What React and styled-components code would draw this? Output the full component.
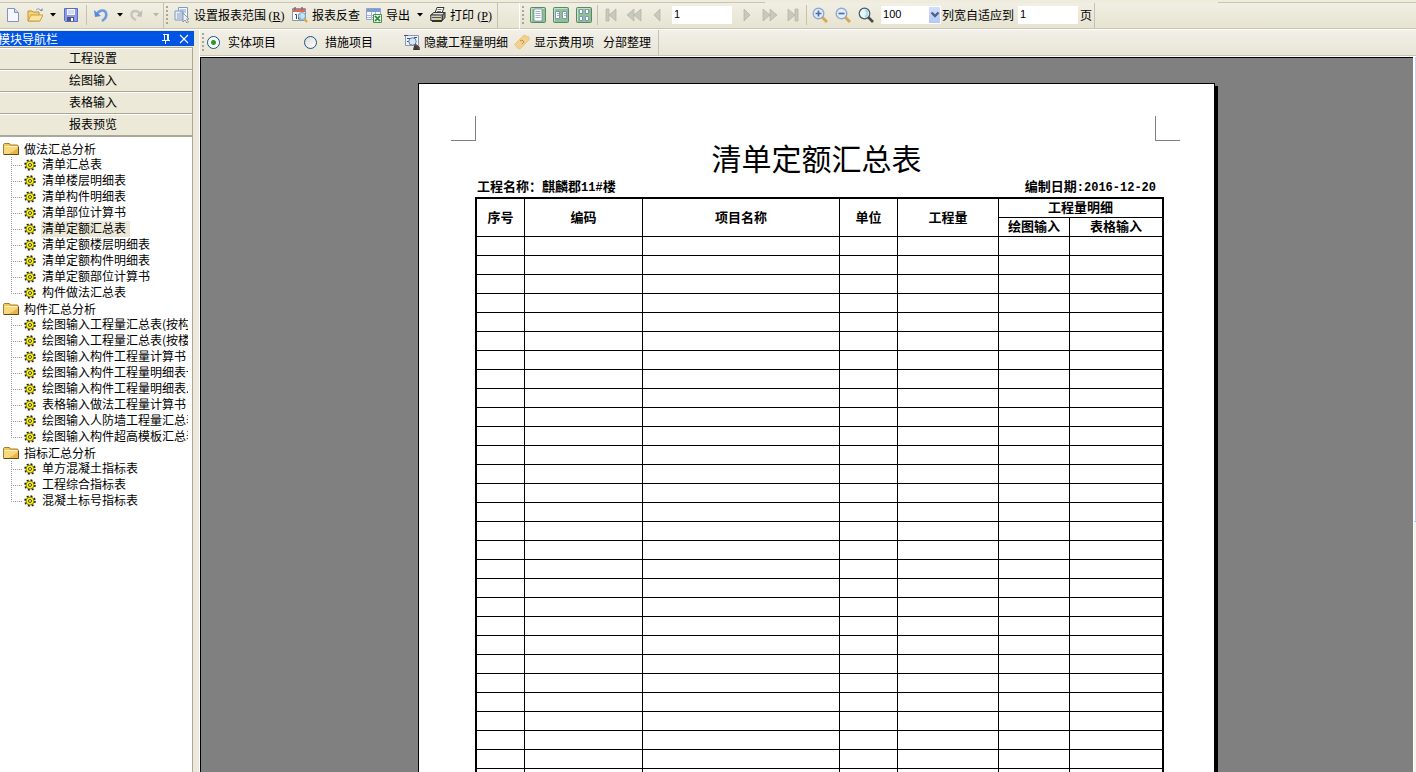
import { useState } from "react";
import styled, { createGlobalStyle, css } from "styled-components";

const navSections = ["工程设置", "绘图输入", "表格输入", "报表预览"];

const reportTree = [
  {
    name: "做法汇总分析",
    reports: [
      "清单汇总表",
      "清单楼层明细表",
      "清单构件明细表",
      "清单部位计算书",
      "清单定额汇总表",
      "清单定额楼层明细表",
      "清单定额构件明细表",
      "清单定额部位计算书",
      "构件做法汇总表",
    ],
  },
  {
    name: "构件汇总分析",
    reports: [
      "绘图输入工程量汇总表(按构件)",
      "绘图输入工程量汇总表(按楼层)",
      "绘图输入构件工程量计算书",
      "绘图输入构件工程量明细表一",
      "绘图输入构件工程量明细表...",
      "表格输入做法工程量计算书",
      "绘图输入人防墙工程量汇总表",
      "绘图输入构件超高模板汇总表",
    ],
  },
  {
    name: "指标汇总分析",
    reports: ["单方混凝土指标表", "工程综合指标表", "混凝土标号指标表"],
  },
];

const columnWidths = [48, 118, 197, 58, 101, 71, 92];
const emptyRows = Array.from({ length: 44 }, (_, i) => i);

export default function App() {
  const [selected, setSelected] = useState("清单定额汇总表");

  return (
    <>
      <GlobalStyle />
      <Window>
        <TopStrip>
          <StripEdge $share="54%" />
          <StripEdge $share="14%" />
        </TopStrip>
        <ToolbarRow>
          <FileBand />
          <ReportBand />
          <BandGap />
          <PagingBand />
        </ToolbarRow>
        <Body>
          <Navigator selected={selected} onSelect={setSelected} />
          <Main>
            <OptionsBar />
            <Preview />
          </Main>
        </Body>
      </Window>
    </>
  );
}

function FileBand() {
  return (
    <Band $indent>
      <ToolButton aria-label="新建"><NewIcon /></ToolButton>
      <ToolButton aria-label="打开"><OpenIcon /></ToolButton>
      <Drop aria-label="最近文件"><ArrowIcon /></Drop>
      <ToolButton aria-label="保存"><SaveIcon /></ToolButton>
      <Separator $wide />
      <ToolButton aria-label="撤销"><UndoIcon /></ToolButton>
      <Drop aria-label="撤销列表"><ArrowIcon /></Drop>
      <ToolButton aria-label="恢复" disabled><RedoIcon /></ToolButton>
      <Drop aria-label="恢复列表" disabled><ArrowIcon color="#b9b7ab" /></Drop>
    </Band>
  );
}

function ReportBand() {
  return (
    <Band>
      <Grip />
      <ToolButton>
        <RangeIcon />
        <span>设置报表范围<Mnemonic>(<u>R</u>)</Mnemonic></span>
      </ToolButton>
      <ToolButton><CheckIcon />报表反查</ToolButton>
      <ToolButton><ExportIcon />导出</ToolButton>
      <Drop aria-label="导出选项"><ArrowIcon /></Drop>
      <ToolButton>
        <PrintIcon />
        <span>打印<Mnemonic>(<u>P</u>)</Mnemonic></span>
      </ToolButton>
    </Band>
  );
}

function PagingBand() {
  return (
    <Band $light>
      <Grip />
      <Group>
        <ToolButton aria-label="单页"><PagesIcon kind="one" /></ToolButton>
        <ToolButton aria-label="双页"><PagesIcon kind="two" /></ToolButton>
        <ToolButton aria-label="四页"><PagesIcon kind="four" /></ToolButton>
      </Group>
      <Separator />
      <Group>
        <ToolButton aria-label="首页" disabled><StepIcon d="M3 2h3v12H3zM13 2v12L6 8z" /></ToolButton>
        <ToolButton aria-label="快退" disabled><StepIcon d="M8 2v12L1 8zM15 2v12L8 8z" /></ToolButton>
        <ToolButton aria-label="上一页" disabled><StepIcon d="M11 2v12L5 8z" /></ToolButton>
      </Group>
      <TextField aria-label="页码" defaultValue="1" />
      <Group>
        <ToolButton aria-label="下一页" disabled><StepIcon d="M5 2v12l6-6z" /></ToolButton>
        <ToolButton aria-label="快进" disabled><StepIcon d="M1 2v12l7-6zM8 2v12l7-6z" /></ToolButton>
        <ToolButton aria-label="末页" disabled><StepIcon d="M3 2v12l7-6zM10 2h3v12h-3z" /></ToolButton>
      </Group>
      <Separator />
      <Group>
        <ToolButton aria-label="放大"><ZoomIcon sign="plus" /></ToolButton>
        <ToolButton aria-label="缩小"><ZoomIcon sign="minus" /></ToolButton>
        <ToolButton aria-label="缩放"><LensIcon /></ToolButton>
      </Group>
      <Combo>
        <ZoomSelect aria-label="缩放比例" defaultValue="100">
          <option>50</option>
          <option>100</option>
          <option>200</option>
        </ZoomSelect>
        <ComboArrow>
          <svg width="10" height="8" viewBox="0 0 10 8">
            <path d="M1.500 1.500L5 5l3.500-3.500" fill="none" stroke="#4d6185" strokeWidth="2.400" />
          </svg>
        </ComboArrow>
      </Combo>
      <label htmlFor="fit">列宽自适应到</label>
      <TextField id="fit" defaultValue="1" $short />
      <span>页</span>
    </Band>
  );
}

function OptionsBar() {
  return (
    <OptionsRow>
      <OptionsBand>
        <Grip />
        <RadioItem><Radio type="radio" name="kind" defaultChecked />实体项目</RadioItem>
        <RadioItem><Radio type="radio" name="kind" />措施项目</RadioItem>
        <ToolButton><HideIcon />隐藏工程量明细</ToolButton>
        <ToolButton><TagIcon />显示费用项</ToolButton>
        <ToolButton $wide>分部整理</ToolButton>
      </OptionsBand>
    </OptionsRow>
  );
}

function Navigator({ selected, onSelect }) {
  return (
    <Nav>
      <NavCaption>
        <NavTitle>模块导航栏</NavTitle>
        <CaptionButton aria-label="固定">
          <svg width="10" height="10" viewBox="0 0 10 10" shapeRendering="crispEdges">
            <path d="M2 0h6v1H2zM3 1h1v5H3zM6 1h2v5H6zM1 6h8v1H1zM4 7h1v3H4z" fill="#fff" />
          </svg>
        </CaptionButton>
        <CaptionButton aria-label="关闭">
          <svg width="10" height="10" viewBox="0 0 10 10">
            <path d="M1 1l8 8M9 1L1 9" stroke="#fff" strokeWidth="1.100" />
          </svg>
        </CaptionButton>
      </NavCaption>
      <NavPanel>
        {navSections.map((section) => (
          <NavSection key={section}>{section}</NavSection>
        ))}
        <Tree>
          {reportTree.map((folder) => (
            <li key={folder.name}>
              <Folder><FolderIcon />{folder.name}</Folder>
              <Branch>
                {folder.reports.map((report) => (
                  <Leaf key={report}>
                    <GearIcon />
                    <LeafButton $active={report === selected} onClick={() => onSelect(report)}>
                      {report}
                    </LeafButton>
                  </Leaf>
                ))}
              </Branch>
            </li>
          ))}
        </Tree>
      </NavPanel>
    </Nav>
  );
}

function Preview() {
  return (
    <PreviewRow>
      <Canvas>
        <Paper>
          <CropMarks>
            <CropMark $side="right" />
            <CropMark $side="left" />
          </CropMarks>
          <PaperTitle>清单定额汇总表</PaperTitle>
          <PaperContent>
            <PaperInfo>
              <span>工程名称：麒麟郡<Digits>11#</Digits>楼</span>
              <span>编制日期<Digits>:2016-12-20</Digits></span>
            </PaperInfo>
            <Sheet>
              <colgroup>
                {columnWidths.map((width, i) => (
                  <col key={i} style={{ width }} />
                ))}
              </colgroup>
              <thead>
                <tr>
                  <th rowSpan={2}>序号</th>
                  <th rowSpan={2}>编码</th>
                  <th rowSpan={2}>项目名称</th>
                  <th rowSpan={2}>单位</th>
                  <th rowSpan={2}>工程量</th>
                  <th colSpan={2} className="last">工程量明细</th>
                </tr>
                <tr>
                  <th>绘图输入</th>
                  <th className="last">表格输入</th>
                </tr>
              </thead>
              <tbody>
                {emptyRows.map((row) => (
                  <tr key={row}>
                    {columnWidths.map((_, i) => (
                      <td key={i} className={i === 6 ? "last" : undefined} />
                    ))}
                  </tr>
                ))}
              </tbody>
            </Sheet>
          </PaperContent>
        </Paper>
      </Canvas>
      <ScrollTrack><ScrollThumb /></ScrollTrack>
    </PreviewRow>
  );
}

/* icons */

const Icon = ({ children, ...rest }) => (
  <svg width="16" height="16" viewBox="0 0 16 16" aria-hidden="true" {...rest}>{children}</svg>
);

const ArrowIcon = ({ color = "#000" }) => (
  <svg width="6" height="4" viewBox="0 0 6 4"><path d="M0 0h6L3 3.500z" fill={color} /></svg>
);

const NewIcon = () => (
  <Icon>
    <path d="M2.500 1.500h7l4 4v9h-11z" fill="#f4f8fe" stroke="#7f95ba" />
    <path d="M9.500 1.500v4h4" fill="#cbd9ee" stroke="#7f95ba" />
  </Icon>
);

const OpenIcon = () => (
  <Icon>
    <path d="M1 14V4h4l1 1h6v9z" fill="#f5d274" stroke="#c09334" />
    <path d="M1 14l3-6h12l-3 6z" fill="#fbe3a0" stroke="#c99f42" />
    <path d="M9 3c2-2 4-1 5 1" fill="none" stroke="#7f9cc0" />
    <path d="M12.500 4h3V1z" fill="#6d8cb6" />
  </Icon>
);

const SaveIcon = () => (
  <Icon>
    <path d="M1.500 1.500h13v13h-12l-1-1z" fill="#8c9ae8" stroke="#5a6bc0" />
    <path d="M4 2h8v6H4z" fill="#f2f5ff" />
    <path d="M5 4h6M5 6h6" stroke="#b8c4e6" />
    <path d="M4 10h7v4H4z" fill="#4d5780" />
    <path d="M8 11h2v3H8z" fill="#fff" />
  </Icon>
);

const UndoIcon = () => (
  <Icon>
    <path d="M3 7c2-4 8-5 9-1 1 3-1 6-4 8" fill="none" stroke="#6f9ae0" strokeWidth="2.600" />
    <path d="M0 3l1 7 6-1z" fill="#5b88d6" />
  </Icon>
);

const RedoIcon = () => (
  <Icon>
    <path d="M10 7C8 3 2 3 1.500 7 1 10 4 12 6 13" fill="none" stroke="#c5c4bd" strokeWidth="2.400" />
    <path d="M12.500 3l-1 7-5-1z" fill="#bcbbb4" />
  </Icon>
);

const RangeIcon = () => (
  <Icon>
    <path d="M4.500.5h9v11h-9z" fill="#f3f7fd" stroke="#829bc1" />
    <path d="M1 4h8v9H1z" fill="#e3ecf8" stroke="#829bc1" />
    <path d="M6 3h6M6 5h6M3 7h6M3 9h5M3 11h5" stroke="#8ca3c7" />
    <path d="M9 6v9l2-2 2 3 1.500-1-2-3H15z" fill="#eef1f6" stroke="#7a8599" strokeWidth=".8" />
  </Icon>
);

const CheckIcon = () => (
  <Icon>
    <path d="M.5 1.500h13v12H.5z" fill="#f7f8fb" stroke="#8996ac" />
    <path d="M1 2h12v3H1z" fill="#df6a4c" />
    <path d="M3 0v3M10 0v3" stroke="#6b7485" strokeWidth="1.500" />
    <path d="M3 7.500h1.500V12M6.500 7.500h2V12h-2z" fill="none" stroke="#414955" />
    <circle cx="10" cy="9" r="3.500" fill="#b9e3f7" fillOpacity=".85" stroke="#75a7cb" />
    <path d="M12.500 12l2.500 3" stroke="#e0a640" strokeWidth="2.200" />
  </Icon>
);

const ExportIcon = () => (
  <Icon>
    <path d="M.5 1.500h14v11H.5z" fill="#f8fafe" stroke="#91a4c8" />
    <path d="M1 2h13v3H1z" fill="#7e9bd2" />
    <path d="M5.500 5v8M9.500 5v8M1 8.500h13M1 10.500h13" stroke="#a9b9d9" />
    <path d="M7.500 7.500h8v8h-8z" fill="#e5f3e2" stroke="#43934b" />
    <path d="M9 9l5 5M14 9l-5 5" stroke="#2d8338" strokeWidth="1.700" />
  </Icon>
);

const PrintIcon = () => (
  <Icon>
    <path d="M5 6l2-5.500h7L12 6z" fill="#fff" stroke="#333" />
    <path d="M7.500 2.500h4M7 4.500h4" stroke="#777" />
    <path d="M.8 8l3-2.500h11L12 8.500z" fill="#e8e8e2" stroke="#333" />
    <path d="M.8 8h11.500v5.500H.8z" fill="#d0d0ca" stroke="#333" />
    <path d="M12.300 8.500l2.700-3v5l-2.700 3z" fill="#8d8d88" stroke="#333" />
    <path d="M2 10.500h9" stroke="#555" />
    <path d="M7 11h3v1.500H7z" fill="#efd530" />
    <path d="M2 14.500h10" stroke="#333" />
  </Icon>
);

const PagesIcon = ({ kind }) => (
  <Icon>
    <rect x=".5" y=".5" width="15" height="15" rx="1" fill="#8fc093" stroke="#548b62" />
    <path d="M1.500 14V1.500H14" fill="none" stroke="#c5e2c4" />
    {kind === "one" && (
      <>
        <path d="M4 2h8v12H4z" fill="#fff" stroke="#6b7fa8" strokeWidth=".7" />
        <path d="M5.500 4.500h5M5.500 6.500h5M5.500 8.500h5M5.500 10.500h5" stroke="#a3b2cf" />
      </>
    )}
    {kind === "two" && (
      <>
        <path d="M2.500 4.500h4v7h-4zM9.500 4.500h4v7h-4z" fill="#fff" stroke="#7f95bd" />
        <path d="M4 6.500h2M4 8.500h2M11 6.500h2M11 8.500h2" stroke="#a3b2cf" />
      </>
    )}
    {kind === "four" && (
      <path d="M3.500 2.500h3v4h-3zM9.500 2.500h3v4h-3zM3.500 9.500h3v4h-3zM9.500 9.500h3v4h-3z" fill="#fff" stroke="#7f95bd" />
    )}
  </Icon>
);

const StepIcon = ({ d }) => (
  <Icon>
    <path d={d} fill="#c9c8be" stroke="#b3b2a8" strokeWidth=".7" />
  </Icon>
);

const ZoomIcon = ({ sign }) => (
  <Icon>
    <path d="M10 10l5 5" stroke="#d9a94f" strokeWidth="3" />
    <circle cx="6.500" cy="6.500" r="5.300" fill="#e3eefb" stroke="#93a8cb" strokeWidth="1.400" />
    <path d={sign === "plus" ? "M3.500 6.500h6M6.500 3.500v6" : "M3.500 6.500h6"} stroke="#4b6cae" strokeWidth="1.700" />
  </Icon>
);

const LensIcon = () => (
  <Icon>
    <path d="M10 10l5 5" stroke="#4a4a4a" strokeWidth="2.600" />
    <circle cx="6.500" cy="6.500" r="5.300" fill="#e4f7fd" stroke="#4d545c" strokeWidth="1.200" />
    <path d="M7 3c3 1 3 5 0 7" fill="none" stroke="#a6dcee" strokeWidth="2" />
  </Icon>
);

const HideIcon = () => (
  <Icon>
    <path d="M1.500 1.500h13v10h-13z" fill="#edf2f9" stroke="#8799b5" />
    <path d="M0 1.500h4M3 4.500h3M10 3.500h3M3 7.500h2" stroke="#3e5275" />
    <path d="M9 16l1-4h5l1 4z" fill="#39393d" />
    <circle cx="8.500" cy="7.500" r="3.700" fill="#d6e7f8" stroke="#627ba3" />
    <path d="M11 10.500l4 4" stroke="#56463a" strokeWidth="2.400" />
  </Icon>
);

const TagIcon = () => (
  <Icon>
    <path d="M.5 10.500L10 1l2 1 3 1v3L6 15l-2-.5z" fill="#f3d18d" stroke="#e6c48a" />
    <path d="M6 7l2-1 2 2-2 2" fill="none" stroke="#b98e49" />
  </Icon>
);

const FolderIcon = () => (
  <Icon>
    <path d="M.5 13.500v-10l1-1h5l1 1.500h7l.5 1v8.500z" fill="#f2c55b" stroke="#a67c28" />
    <path d="M1 6h14v7H1z" fill="#f9d77c" />
    <path d="M1.500 5.500h13" stroke="#fff2c2" />
    <path d="M6 13l9-6v6z" fill="#e9b548" />
    <path d="M1 13.500h14.500v-8" fill="none" stroke="#5f491b" />
  </Icon>
);

const GearIcon = () => (
  <svg width="12" height="12" viewBox="0 0 12 12" aria-hidden="true">
    <circle cx="6" cy="6" r="5" fill="none" stroke="#1d1d08" strokeWidth="1.600" strokeDasharray="1.960 1.960" />
    <circle cx="6" cy="6" r="4" fill="#fff200" stroke="#4c4a10" strokeWidth=".7" />
    <circle cx="6" cy="6" r="1.500" fill="#fffbc0" stroke="#33320c" strokeWidth=".9" />
  </svg>
);

/* styles */

const GlobalStyle = createGlobalStyle`
  * {
    box-sizing: border-box;
  }
  body {
    margin: 0;
    background: #ece9d8;
    color: #000;
    font: 12px/16px "Noto Sans CJK SC", sans-serif;
  }
  button, input, select {
    margin: 0;
    font: inherit;
    color: inherit;
  }
  svg {
    display: block;
    flex: none;
  }
`;

const Window = styled.div`
  display: flex;
  flex-direction: column;
  height: 100vh;
  overflow: hidden;
`;

const TopStrip = styled.div`
  display: flex;
  flex: none;
  justify-content: space-between;
  height: 3px;
  background: #efecdd;
`;

const StripEdge = styled.div`
  width: ${({ $share }) => $share};
  border-bottom: 1px solid #c9c5b2;
`;

const ToolbarRow = styled.div`
  display: flex;
  flex: none;
  height: 27px;
  background: linear-gradient(#f1efe4, #e6e3d0);
  border-bottom: 1px solid #fff;
  box-shadow: inset 0 -1px #c9c5b2;
`;

const Band = styled.div`
  display: flex;
  align-items: center;
  flex: none;
  padding-left: ${({ $indent }) => ($indent ? "2px" : "0")};
  padding-right: ${({ $light }) => ($light ? "2px" : "0")};
  padding-bottom: 2px;
  border-right: 1px solid #c5c2af;
  border-left: ${({ $light }) => ($light ? "1px solid #fff" : "0")};
  white-space: nowrap;
`;

const BandGap = styled.div`
  width: 21px;
`;

const Group = styled.div`
  display: flex;
  gap: 1px;
`;

const Grip = styled.span`
  flex: none;
  width: 3px;
  height: 19px;
  margin: 0 2px;
  background: repeating-linear-gradient(#a9a695 0 2px, transparent 2px 4px) 0 0 / 2px 100% no-repeat;
`;

const Separator = styled.span`
  width: 1px;
  height: 20px;
  margin: 0 ${({ $wide }) => ($wide ? "4px" : "2px")};
  background: #c5c2af;
`;

const ToolButton = styled.button`
  display: flex;
  align-items: center;
  gap: 4px;
  height: 22px;
  padding: 0 ${({ $wide }) => ($wide ? "6px" : "3px")};
  border: 0;
  background: none;
  white-space: nowrap;
`;

const Drop = styled.button`
  display: flex;
  align-items: center;
  justify-content: center;
  width: 14px;
  height: 22px;
  padding: 0;
  border: 0;
  background: none;
`;

const Mnemonic = styled.span`
  display: inline-block;
  width: 20px;
  padding-left: 1px;
  font-family: "Liberation Serif", serif;
`;

const fieldStyle = css`
  height: 18px;
  border: 0;
  border-radius: 0;
  background: #fff;
  font: 11px/16px "Liberation Sans", sans-serif;
`;

const TextField = styled.input`
  ${fieldStyle}
  width: 60px;
  margin: 0 ${({ $short }) => ($short ? "2px" : "4px")} 0 4px;
  padding: 0 2px 2px;
`;

const Combo = styled.div`
  display: grid;
  grid-template-columns: 48px 12px;
  margin: 0 1px 0 4px;
`;

const ZoomSelect = styled.select`
  ${fieldStyle}
  grid-area: 1 / 1 / 2 / 3;
  padding: 0 2px 2px;
  appearance: none;
`;

const ComboArrow = styled.span`
  grid-area: 1 / 2;
  z-index: 1;
  display: flex;
  align-items: center;
  justify-content: center;
  margin: 1px 1px 1px 0;
  background: linear-gradient(#d3e0fc, #b3c8f5);
  pointer-events: none;
`;

const Body = styled.div`
  display: flex;
  flex: 1;
  min-height: 0;
`;

const Nav = styled.aside`
  flex: none;
  width: 200px;
  display: flex;
  flex-direction: column;
  padding: 1px 5px 0 0;
  background: #ece9d8;
  border-right: 1px solid #fff;
`;

const NavCaption = styled.div`
  display: flex;
  align-items: center;
  height: 15px;
  padding-right: 1px;
  background: #0054e3;
  color: #fff;
  overflow: hidden;
`;

const NavTitle = styled.span`
  flex: 1;
  margin-left: -2px;
`;

const CaptionButton = styled.button`
  display: flex;
  justify-content: center;
  width: 18px;
  padding: 0;
  border: 0;
  background: none;
`;

const NavPanel = styled.div`
  display: flex;
  flex: 1;
  flex-direction: column;
  min-height: 0;
  margin: 1px 1px 0 0;
  border: solid #aca899;
  border-width: 1px 1px 0 0;
`;

const NavSection = styled.button`
  flex: none;
  height: 22px;
  padding: 0 6px 2px 0;
  border: solid #aca899;
  border-width: 0 0 1px;
  background: #ece9d8;
  box-shadow: inset 0 1px #fff;
  line-height: 18px;
`;

const Tree = styled.ul`
  flex: 1;
  margin: 0;
  padding: 4px 4px 0 0;
  border-top: 1px solid #aca899;
  background: #fff;
  list-style: none;
  overflow: hidden;
`;

const Folder = styled.div`
  display: flex;
  align-items: center;
  gap: 5px;
  height: 16px;
  padding-left: 3px;
`;

const Branch = styled.ul`
  margin: 0;
  padding: 0 0 0 11px;
  list-style: none;
`;

const Leaf = styled.li`
  display: flex;
  align-items: center;
  height: 16px;

  &::before {
    content: "";
    flex: none;
    width: 11px;
    height: 16px;
    margin-right: 2px;
    background:
      repeating-linear-gradient(#999 0 1px, transparent 1px 2px) 0 0 / 1px 100% no-repeat,
      repeating-linear-gradient(90deg, #999 0 1px, transparent 1px 2px) 0 8px / 100% 1px no-repeat;
  }

  &:last-child::before {
    background-size: 1px 50%, 100% 1px;
  }
`;

const LeafButton = styled.button`
  height: 16px;
  margin-left: 5px;
  padding: 0 4px 2px 1px;
  border: 0;
  background: ${({ $active }) => ($active ? "#ece9d8" : "none")};
  line-height: 14px;
  white-space: nowrap;
  overflow: hidden;
`;

const Main = styled.main`
  display: flex;
  flex: 1;
  flex-direction: column;
  min-width: 0;
`;

const OptionsRow = styled.div`
  display: flex;
  flex: none;
  height: 27px;
  background: linear-gradient(#f2f0e8, #e8e5d5);
  border-bottom: 1px solid #fff;
  box-shadow: inset 0 -1px #c9c5b2;
`;

const OptionsBand = styled(Band)`
  padding-right: 1px;
`;

const RadioItem = styled.label`
  display: flex;
  align-items: center;
  gap: 8px;
  width: 97px;
`;

const Radio = styled.input`
  appearance: none;
  flex: none;
  width: 13px;
  height: 13px;
  border: 1px solid #1d5281;
  border-radius: 50%;
  background: linear-gradient(135deg, #dcdcd7, #fff);

  &:checked {
    background: radial-gradient(circle, #21a121 0 2px, #fff 3px);
  }
`;

const PreviewRow = styled.div`
  display: flex;
  flex: 1;
  min-height: 0;
`;

const Canvas = styled.div`
  display: flex;
  flex: 1;
  justify-content: center;
  align-items: flex-start;
  min-width: 0;
  padding: 25px 0 0 19px;
  border: solid #000;
  border-width: 1px 0 0 1px;
  background: #808080;
  overflow: hidden;
`;

const Paper = styled.article`
  flex: none;
  width: 797px;
  min-height: 1127px;
  padding-top: 32px;
  border: 1px solid #000;
  background: #fff;
  box-shadow: 3px 3px #000;
`;

const CropMarks = styled.div`
  display: flex;
  justify-content: space-between;
  padding: 0 34px 0 32px;
`;

const CropMark = styled.span`
  width: 25px;
  height: 25px;
  border-bottom: 1px solid #808080;
  border-${({ $side }) => $side}: 1px solid #808080;
`;

const PaperTitle = styled.h1`
  margin: 0 0 4px;
  font-size: 30px;
  font-weight: 400;
  line-height: 33px;
  text-align: center;
`;

const PaperContent = styled.div`
  padding: 0 50px 50px 56px;
`;

const PaperInfo = styled.div`
  display: flex;
  justify-content: space-between;
  padding: 0 8px 1px 2px;
  font-size: 13px;
  font-weight: 700;
`;

const Digits = styled.span`
  font: 700 12px/16px "Liberation Mono", monospace;
`;

const Sheet = styled.table`
  width: 100%;
  table-layout: fixed;
  border: 2px solid #000;
  border-collapse: separate;
  border-spacing: 0;

  th,
  td {
    height: 19px;
    padding: 0;
    border: solid #000;
    border-width: 0 1px 1px 0;
    font-size: 13px;
    line-height: 16px;
  }

  th {
    padding-bottom: 2px;
  }

  .last {
    border-right: 0;
  }
`;

const ScrollTrack = styled.div`
  flex: none;
  width: 3px;
  border-left: 1px solid #fff;
  background: #f3f3ee;
`;

const ScrollThumb = styled.div`
  height: 65%;
  border-left: 1px solid #fff;
  border-bottom: 1px solid #9db5e8;
  background: #c6d5fb;
`;
